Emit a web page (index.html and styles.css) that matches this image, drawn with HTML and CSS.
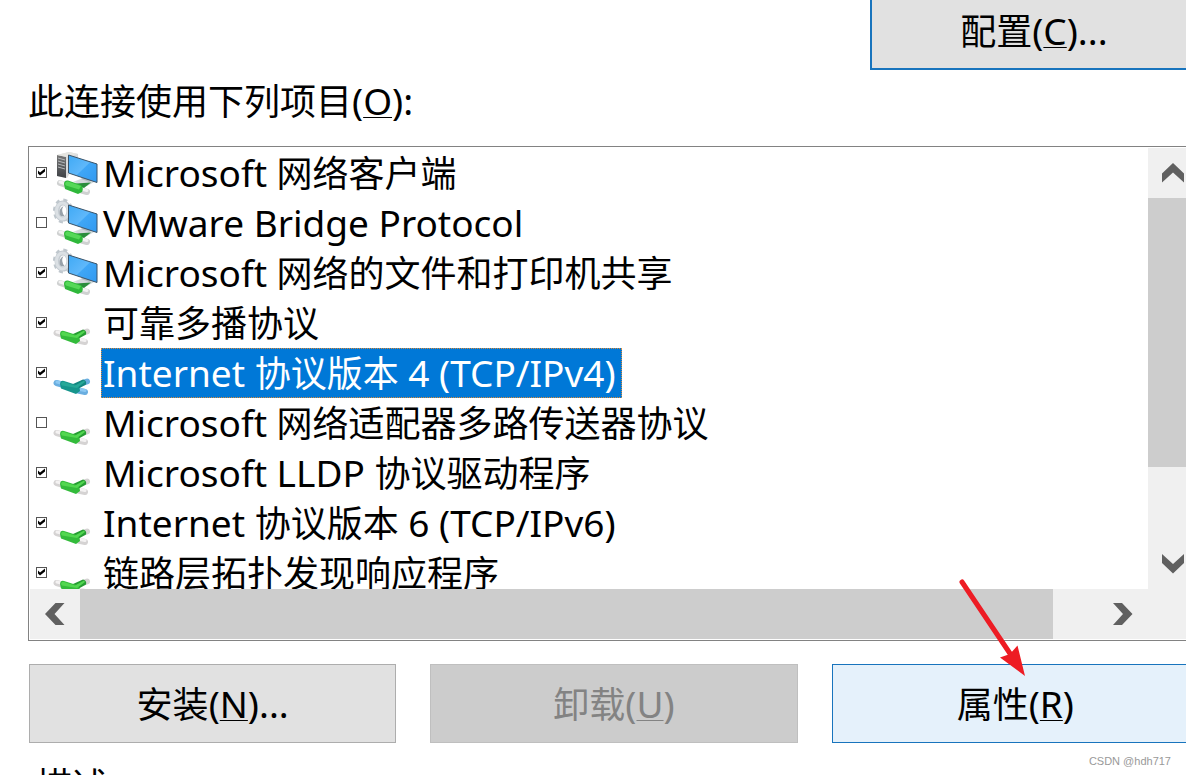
FILE: index.html
```html
<!DOCTYPE html>
<html lang="zh-CN">
<head>
<meta charset="utf-8">
<title>网络连接属性</title>
<link rel="stylesheet" href="styles.css">
</head>
<body>
<svg class="defs" aria-hidden="true">
  <defs>
    <linearGradient id="screen" x1="0" y1="0" x2="1" y2="1">
      <stop offset="0" stop-color="#3fa9f5"/><stop offset=".5" stop-color="#5fb8fa"/><stop offset=".52" stop-color="#3fa6f6"/><stop offset="1" stop-color="#3299f0"/>
    </linearGradient>
    <linearGradient id="tower" x1="0" y1="0" x2="0" y2="1">
      <stop offset="0" stop-color="#777"/><stop offset="1" stop-color="#3f4246"/>
    </linearGradient>
    <symbol id="monitor" viewBox="0 0 45 50">
      <path d="M20 34 30 30 43 33 34 38Z" fill="#d4d8dc"/>
      <path d="M28 31 31 29 39 32 36 34Z" fill="#b4babf"/>
      <path d="M15.500 7 44 16V34.500L15.500 25Z" fill="url(#screen)" stroke="#3a5368" stroke-width="1"/>
      <path d="M23 35.500 38 34.500 31 40 25 41Z" fill="#2a8c3c"/>
      <path d="M7 35 13 37M27 42 34 44" stroke="#cfd1d1" stroke-width="6" stroke-linecap="round"/>
      <path d="M7 34 12 35.500M28 41 34 42.500" stroke="#f3f3f3" stroke-width="3" stroke-linecap="round"/>
      <path d="M11 36Q11 32 15 32.500L28 37Q31 40 29 44L25 46 12 41Z" fill="#2fb83a"/>
      <path d="M12 36Q12.500 33 15 33.500L28 38 26 41.500 13 37.500Z" fill="#55d858"/>
    </symbol>
    <symbol id="client" viewBox="0 0 45 50">
      <path d="M4 7 16 4 25 6 25 12 14 30 4 28Z" fill="#d9dadb"/>
      <path d="M4 7 13 9V30L4 28Z" fill="url(#tower)"/>
      <path d="M5 10 12 12M5 13 12 15M5 16 12 18M5 19 12 21" stroke="#b5b8ba"/>
      <path d="M4 7 16 4 25 6 14 9Z" fill="#e4e4e0"/>
      <use href="#monitor" width="45" height="50"/>
    </symbol>
    <symbol id="service" viewBox="0 0 45 50">
      <ellipse cx="10" cy="13" rx="8" ry="10.500" fill="none" stroke="#bfc7cd" stroke-width="4" stroke-dasharray="3.700 3.600"/>
      <ellipse cx="10" cy="13" rx="6" ry="8" fill="none" stroke="#c3cad0" stroke-width="5"/>
      <ellipse cx="9.500" cy="13" rx="6" ry="8" fill="none" stroke="#dbe0e4" stroke-width="3"/>
      <path d="M10.500 8Q5 11 7 17 8.500 19 11.500 18 7.500 13 10.500 8Z" fill="#98a1a9"/>
      <use href="#monitor" width="45" height="50"/>
    </symbol>
    <symbol id="protocol" viewBox="0 0 45 50">
      <path d="M31 34.500 34 33.500" class="plug"/>
      <path d="M3.500 35 9 36.500M25 42.500 32 44" class="plug"/>
      <path d="M4 34 8 35M27 41.500 32 42.500" class="plug-shine"/>
      <path d="M20 36 30 31.500Q34 32.500 33 36.500L25 41 20 40Z" class="pipe-dark"/>
      <path d="M7 36Q7.500 32 11 33L22 36.500Q27 38 27 43L23 46 8 40.500Z" class="pipe"/>
      <path d="M8 36Q9 33 11 34L22 37.500 31 32.500 32 34 24 40 9 37.500Z" class="pipe-shine"/>
    </symbol>
  </defs>
</svg>

<main class="dialog">
  <button class="btn btn-default configure" type="button"><span>配置<span class="latin">(<u>C</u>)...</span></span></button>
  <h1 class="caption" id="caption">此连接使用下列项目<span class="latin">(<u>O</u>):</span></h1>

  <section class="listbox" aria-labelledby="caption">
    <ul class="items">
      <li class="item"><input type="checkbox" id="i1" checked><svg class="icon"><use href="#client"/></svg><label for="i1"><span class="latin">Microsoft </span>网络客户端</label></li>
      <li class="item"><input type="checkbox" id="i2"><svg class="icon"><use href="#service"/></svg><label for="i2"><span class="latin">VMware Bridge Protocol</span></label></li>
      <li class="item"><input type="checkbox" id="i3" checked><svg class="icon"><use href="#service"/></svg><label for="i3"><span class="latin">Microsoft </span>网络的文件和打印机共享</label></li>
      <li class="item"><input type="checkbox" id="i4" checked><svg class="icon"><use href="#protocol"/></svg><label for="i4">可靠多播协议</label></li>
      <li class="item selected"><input type="checkbox" id="i5" checked><svg class="icon"><use href="#protocol"/></svg><label for="i5"><span class="latin">Internet </span>协议版本<span class="latin"> 4 (TCP/IPv4)</span></label></li>
      <li class="item"><input type="checkbox" id="i6"><svg class="icon"><use href="#protocol"/></svg><label for="i6"><span class="latin">Microsoft </span>网络适配器多路传送器协议</label></li>
      <li class="item"><input type="checkbox" id="i7" checked><svg class="icon"><use href="#protocol"/></svg><label for="i7"><span class="latin">Microsoft LLDP </span>协议驱动程序</label></li>
      <li class="item"><input type="checkbox" id="i8" checked><svg class="icon"><use href="#protocol"/></svg><label for="i8"><span class="latin">Internet </span>协议版本<span class="latin"> 6 (TCP/IPv6)</span></label></li>
      <li class="item"><input type="checkbox" id="i9" checked><svg class="icon"><use href="#protocol"/></svg><label for="i9">链路层拓扑发现响应程序</label></li>
    </ul>
    <div class="scroll scroll-v">
      <button class="arrow" type="button" aria-label="向上滚动"><svg width="22" height="20" viewBox="0 0 22 20"><path d="M0 10.500 11 0 22 10.500V19.500L11 9.500 0 19.500Z"/></svg></button>
      <div class="track"><div class="thumb"></div></div>
      <button class="arrow" type="button" aria-label="向下滚动"><svg width="22" height="20" viewBox="0 0 22 20"><path d="M0 9V0L11 10 22 0V9L11 19.500Z"/></svg></button>
    </div>
    <div class="scroll scroll-h">
      <button class="arrow" type="button" aria-label="向左滚动"><svg width="20" height="22" viewBox="0 0 20 22"><path d="M10.500 0H19.500L9.500 11 19.500 22H10.500L0 11Z"/></svg></button>
      <div class="track"><div class="thumb"></div></div>
      <button class="arrow" type="button" aria-label="向右滚动"><svg width="20" height="22" viewBox="0 0 20 22"><path d="M9 0H0L10 11 0 22H9L19.500 11Z"/></svg></button>
    </div>
    <div class="corner"></div>
  </section>

  <div class="actions">
    <button class="btn" type="button"><span>安装<span class="latin">(<u>N</u>)...</span></span></button>
    <button class="btn" type="button" disabled><span>卸载<span class="latin">(<u>U</u>)</span></span></button>
    <button class="btn btn-hover" type="button"><span>属性<span class="latin">(<u>R</u>)</span></span></button>
  </div>
  <h2 class="description">描述</h2>
</main>

<svg class="pointer" viewBox="0 0 70 100" aria-hidden="true">
  <path d="M5 6 54 79" stroke="#ed1c24" stroke-width="5" stroke-linecap="round"/>
  <path d="M68 100 60.500 69.500 53 78 43 81.500Z" fill="#ed1c24"/>
</svg>
<p class="watermark">CSDN @hdh717</p>
</body>
</html>
```
FILE: styles.css
```css
* {
  box-sizing: border-box;
}

body {
  position: relative;
  height: 100vh;
  margin: 0;
  overflow: hidden;
  background: #fff;
  color: #000;
  font: 36px/50px "Noto Sans", "Noto Sans CJK SC", sans-serif;
}

.defs {
  position: absolute;
  width: 0;
  height: 0;
}

/* The dialog runs a little past the right edge of the window. */
.dialog {
  display: flex;
  flex-direction: column;
  margin: -9px -14px 0 28px;
}

.latin {
  font-size: 37px;
  line-height: 0;
  white-space: pre;
}

u {
  text-decoration-thickness: 1px;
  text-underline-offset: 2px;
  text-decoration-skip-ink: none;
}

.btn {
  height: 79px;
  padding: 2px 0 0;
  border: 1px solid #adadad;
  background: #e1e1e1;
  color: inherit;
  font: inherit;
}

.btn:disabled {
  border-color: #bfbfbf;
  background: #ccc;
  color: #838383;
}

.btn-default {
  border: 2px solid #1874bd;
}

.btn-hover {
  border-color: #1874bd;
  background: #e5f1fb;
}

.configure {
  align-self: flex-end;
  width: 28%;
  margin-right: 2px;
}

.caption,
.description {
  margin: 0;
  font-size: inherit;
  font-weight: 400;
}

.caption {
  margin: 7px 0 19px;
}

.listbox {
  display: grid;
  grid-template-columns: 1fr 50px;
  grid-template-rows: 441px 50px;
  padding: 1px;
  border: 1px solid #828282;
}

.items {
  margin: 0;
  padding: 0;
  overflow: hidden;
  list-style: none;
}

.item {
  display: flex;
  align-items: center;
  height: 50px;
  padding-left: 6px;
  white-space: nowrap;
}

.item input {
  appearance: none;
  width: 11px;
  height: 11px;
  margin: 0 6px 2px 0;
  border: 1px solid #555;
  background: #fff;
}

.item input:checked::before {
  content: "";
  display: block;
  width: 9px;
  height: 9px;
  background: #000;
  clip-path: polygon(1px 3px, 3px 5px, 8px 1px, 8px 4px, 3px 8px, 1px 6px);
}

.icon {
  width: 45px;
  height: 50px;
  margin-right: 3px;
  fill: none;
  --plug: #d5d3d3;
  --plug-shine: #f4f2f2;
  --pipe: #33bb3b;
  --pipe-dark: #259b32;
  --pipe-shine: #52d750;
}

.item label {
  height: 50px;
  padding: 0 6px 0 2px;
  line-height: 52px;
}

.selected label {
  outline: 1px dotted #d68a3c;
  outline-offset: -1px;
  background: #0078d7;
  color: #fff;
}

.selected .icon {
  --plug: #6aaee0;
  --plug-shine: #8cc8f2;
  --pipe: #16958c;
  --pipe-dark: #12857f;
  --pipe-shine: #26a898;
}

.plug,
.plug-shine {
  stroke-linecap: round;
}

.plug { stroke: var(--plug); stroke-width: 6px; }
.plug-shine { stroke: var(--plug-shine); stroke-width: 3px; }
.pipe { fill: var(--pipe); }
.pipe-dark { fill: var(--pipe-dark); }
.pipe-shine { fill: var(--pipe-shine); }

.scroll,
.corner {
  display: flex;
  background: #f0f0f0;
}

.scroll-v {
  flex-direction: column;
}

.arrow {
  display: grid;
  place-items: center;
  flex: none;
  width: 50px;
  height: 50px;
  padding: 0;
  border: 0;
  background: none;
  fill: #606060;
}

.track {
  flex: 1;
}

.thumb {
  background: #cdcdcd;
}

.scroll-v .thumb {
  height: 79%;
}

.scroll-h .thumb {
  width: 95.6%;
  height: 100%;
}

.actions {
  display: grid;
  grid-template-columns: repeat(3, 1fr);
  gap: 34px;
  margin: 23px 1px 0;
}

.description {
  margin: 18px 0 0 8px;
}

.pointer {
  position: absolute;
  top: 576px;
  left: 957px;
  width: 70px;
  height: 100px;
  fill: none;
}

.watermark {
  position: absolute;
  right: 15px;
  bottom: 6px;
  margin: 0;
  color: #999;
  font: 11px/16px "Liberation Sans", sans-serif;
}
```
